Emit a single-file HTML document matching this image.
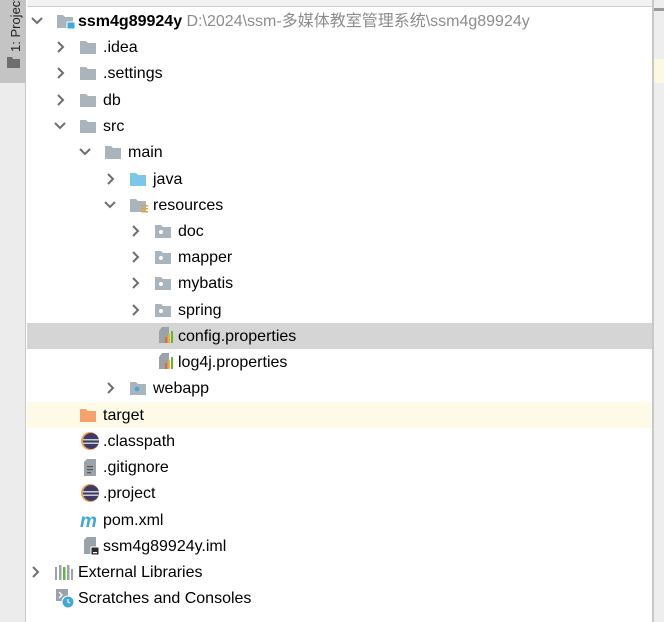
<!DOCTYPE html>
<html><head><meta charset="utf-8"><style>
*{margin:0;padding:0;box-sizing:border-box}
body{width:664px;height:622px;overflow:hidden;background:#fff;position:relative;font-family:"Liberation Sans","Noto Sans CJK SC",sans-serif;font-size:16px;color:#000}
.side{position:absolute;left:0;top:0;width:26px;height:622px;background:#ececec;border-right:1px solid #c9c9c9}
.side .tab{position:absolute;left:0;top:0;width:26px;height:83px;background:#c4c4c4}
.vt{position:absolute;top:52px;transform:rotate(-90deg);transform-origin:0 0;font-size:13px;color:#222;white-space:nowrap;left:8px}
.top{position:absolute;left:27px;top:0;width:625px;height:7px;background:#f2f2f2;border-bottom:1px solid #d0d0d0}
.rp{position:absolute;left:652px;top:0;width:12px;height:622px;background:#eeeeee;border-left:2px solid #c8c8c8}
.row{position:absolute;left:27px;width:625px;height:26px}
.t{position:absolute;top:3px;white-space:nowrap;line-height:20px}
</style></head><body>
<div class="side"><div class="tab"></div><div class="vt">1: Project</div>
<svg style="position:absolute;left:7px;top:57px" width="13" height="11"><path d="M0 0h5l1 2h7v9H0z" fill="#6e6e6e"/></svg></div>
<div class="top"></div>
<div class="rp"><div style="position:absolute;left:0;top:59px;width:10px;height:24px;background:#fdf8e1"></div><div style="position:absolute;left:0;top:8px;width:10px;height:3px;background:#999"></div></div>

<div class="row" style="top:323px;background:#d5d5d5"></div>
<div class="row" style="top:402px;background:#fdfbe8"></div>

<svg width="664" height="622" style="position:absolute;left:0;top:0">
<defs>
<path id="fold" d="M0 0h6l2 2h8v11H0z"/>
</defs>
<g fill="none" stroke="#6e6e6e" stroke-width="2">
<polyline points="32,18 37,23 42,18"/>
<polyline points="55,123 60,128 65,123"/>
<polyline points="80,149 85,154 90,149"/>
<polyline points="105,202 110,207 115,202"/>
<polyline points="58,42 63,47 58,52"/>
<polyline points="58,68 63,73 58,78"/>
<polyline points="58,95 63,100 58,105"/>
<polyline points="108,174 113,179 108,184"/>
<polyline points="133,226 138,231 133,236"/>
<polyline points="133,252 138,257 133,262"/>
<polyline points="133,278 138,283 133,288"/>
<polyline points="133,305 138,310 133,315"/>
<polyline points="108,383 113,388 108,393"/>
<polyline points="33,567 38,572 33,577"/>
</g>
<g transform="translate(57,15)"><use href="#fold" fill="#aab4bc"/><rect x="10" y="7" width="8" height="7" fill="#3fa9dc" stroke="#fff"/></g>
<g fill="#aab4bc">
<use href="#fold" x="80" y="41"/><use href="#fold" x="80" y="67"/><use href="#fold" x="80" y="94"/><use href="#fold" x="80" y="120"/>
<use href="#fold" x="105" y="146"/>
<use href="#fold" x="130" y="199"/>
<use href="#fold" x="155" y="225"/><use href="#fold" x="155" y="251"/><use href="#fold" x="155" y="277"/><use href="#fold" x="155" y="304"/>
<use href="#fold" x="130" y="382"/>
</g>
<use href="#fold" x="130" y="173" fill="#7cc6e8"/>
<use href="#fold" x="80" y="409" fill="#f5a26f"/>
<g fill="#e2a23c"><rect x="141" y="205" width="7" height="1.5"/><rect x="141" y="208" width="7" height="1.5"/><rect x="141" y="211" width="7" height="1.5"/></g>
<g fill="#fff"><circle cx="161" cy="232" r="2"/><circle cx="161" cy="258" r="2"/><circle cx="161" cy="284" r="2"/><circle cx="161" cy="311" r="2"/></g>
<circle cx="137" cy="389" r="2.3" fill="#3fa9dc"/>
<g transform="translate(159,327)"><path d="M3 0h7v16H0V4z" fill="#9aa3aa"/><rect x="6" y="10" width="2" height="6" fill="#e8692b"/><rect x="9" y="7" width="2" height="9" fill="#f0b323"/><rect x="12" y="4" width="2" height="12" fill="#5fb832"/></g>
<g transform="translate(159,353)"><path d="M3 0h7v16H0V4z" fill="#9aa3aa"/><rect x="6" y="10" width="2" height="6" fill="#e8692b"/><rect x="9" y="7" width="2" height="9" fill="#f0b323"/><rect x="12" y="4" width="2" height="12" fill="#5fb832"/></g>
<g><circle cx="90" cy="441" r="9" fill="#f1a04b"/><circle cx="91" cy="441" r="8" fill="#3c3a6b"/><rect x="83" y="439" width="16" height="1.5" fill="#ccc"/><rect x="83" y="442.5" width="16" height="1.5" fill="#ccc"/></g>
<g><circle cx="90" cy="493" r="9" fill="#f1a04b"/><circle cx="91" cy="493" r="8" fill="#3c3a6b"/><rect x="83" y="491" width="16" height="1.5" fill="#ccc"/><rect x="83" y="494.5" width="16" height="1.5" fill="#ccc"/></g>
<g transform="translate(84,459)"><path d="M3 0h9v17H0V3z" fill="#9aa3aa"/><rect x="3" y="7" width="6" height="1.2" fill="#555"/><rect x="3" y="10" width="6" height="1.2" fill="#555"/><rect x="3" y="13" width="4" height="1.2" fill="#555"/></g>
<text x="80" y="527" font-family="Liberation Sans" font-style="italic" font-weight="bold" font-size="19" fill="#3fa9dc">m</text>
<g transform="translate(84,537)"><path d="M3 0h9v17H0V3z" fill="#9aa3aa"/><rect x="7" y="10" width="8" height="8" fill="#2b2b2b" stroke="#fff"/><rect x="9" y="15" width="4" height="1.2" fill="#fff"/></g>
<g transform="translate(55,565)"><rect x="0" y="2" width="2" height="13" fill="#9aa3aa"/><rect x="4" y="0" width="2.5" height="15" fill="#9aa3aa"/><rect x="8" y="2" width="2.5" height="13" fill="#5fb832"/><rect x="12" y="0" width="2.5" height="15" fill="#9aa3aa"/><rect x="16" y="4" width="2" height="11" fill="#9aa3aa"/></g>
<g transform="translate(56,589)"><rect x="0" y="0" width="12" height="12" fill="#9aa3aa"/><polyline points="3,3 6,6 3,9" fill="none" stroke="#fff" stroke-width="1.3"/><circle cx="12" cy="13" r="6" fill="#3fa9dc" stroke="#fff"/><polyline points="12,10 12,13 14,14" fill="none" stroke="#fff" stroke-width="1.2"/></g>
</svg>

<div class="t" style="left:78px;top:12px"><b>ssm4g89924y</b> <span style="color:#8c8c8c">D:\2024\ssm-多媒体教室管理系统\ssm4g89924y</span></div>
<div class="t" style="left:103px;top:38px">.idea</div>
<div class="t" style="left:103px;top:64px">.settings</div>
<div class="t" style="left:103px;top:91px">db</div>
<div class="t" style="left:103px;top:117px">src</div>
<div class="t" style="left:128px;top:143px">main</div>
<div class="t" style="left:153px;top:170px">java</div>
<div class="t" style="left:153px;top:196px">resources</div>
<div class="t" style="left:178px;top:222px">doc</div>
<div class="t" style="left:178px;top:248px">mapper</div>
<div class="t" style="left:178px;top:274px">mybatis</div>
<div class="t" style="left:178px;top:301px">spring</div>
<div class="t" style="left:178px;top:327px">config.properties</div>
<div class="t" style="left:178px;top:353px">log4j.properties</div>
<div class="t" style="left:153px;top:379px">webapp</div>
<div class="t" style="left:103px;top:406px">target</div>
<div class="t" style="left:103px;top:432px">.classpath</div>
<div class="t" style="left:103px;top:458px">.gitignore</div>
<div class="t" style="left:103px;top:484px">.project</div>
<div class="t" style="left:103px;top:511px">pom.xml</div>
<div class="t" style="left:103px;top:537px">ssm4g89924y.iml</div>
<div class="t" style="left:78px;top:563px">External Libraries</div>
<div class="t" style="left:78px;top:589px">Scratches and Consoles</div>
</body></html>
